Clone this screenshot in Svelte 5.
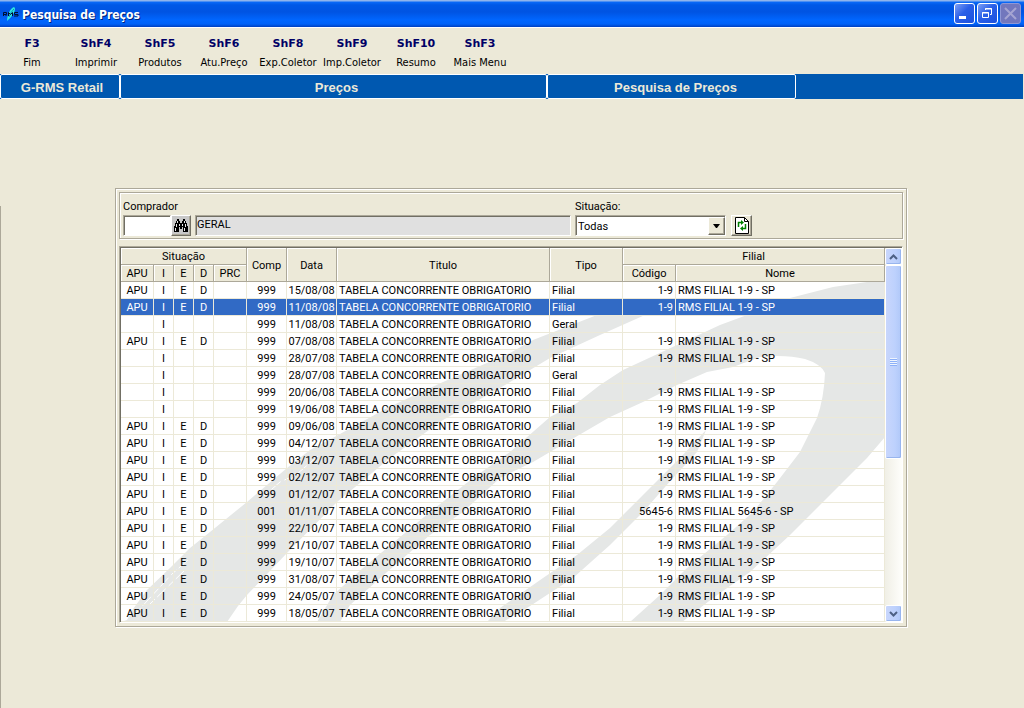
<script lang="ts">
  type Row = { flags: string; comp: string; data: string; tipo: string; codigo: string; nome: string }

  const actions = [
    { key: 'F3', label: 'Fim' },
    { key: 'ShF4', label: 'Imprimir' },
    { key: 'ShF5', label: 'Produtos' },
    { key: 'ShF6', label: 'Atu.Preço' },
    { key: 'ShF8', label: 'Exp.Coletor' },
    { key: 'ShF9', label: 'Imp.Coletor' },
    { key: 'ShF10', label: 'Resumo' },
    { key: 'ShF3', label: 'Mais Menu' },
  ]

  const filial = (data: string, flags = 'AIED', comp = '999', codigo = '1-9'): Row => ({
    flags, comp, data, codigo, tipo: 'Filial', nome: `RMS FILIAL ${codigo} - SP`,
  })
  const geral = (data: string): Row => ({ flags: 'I', comp: '999', data, tipo: 'Geral', codigo: '', nome: '' })

  const rows: Row[] = [
    filial('15/08/08'),
    filial('11/08/08'),
    geral('11/08/08'),
    filial('07/08/08'),
    filial('28/07/08', 'I'),
    geral('28/07/08'),
    filial('20/06/08', 'I'),
    filial('19/06/08', 'I'),
    filial('09/06/08'),
    filial('04/12/07'),
    filial('03/12/07'),
    filial('02/12/07'),
    filial('01/12/07'),
    filial('01/11/07', 'AIED', '001', '5645-6'),
    filial('22/10/07'),
    filial('21/10/07'),
    filial('19/10/07'),
    filial('31/08/07'),
    filial('24/05/07'),
    filial('18/05/07'),
  ]

  let selected = $state(1)
  let comprador = $state('')
  let situacao = $state('Todas')
</script>

<div class="window">
  <header class="titlebar">
    <svg class="logo" width="16" height="16" viewBox="0 0 16 16" aria-hidden="true">
      <path d="M4 15C4 10 7 2 11 1C14 3 10 10 4 15Z" fill="#2fe6e0" />
      <path d="M6 11C7 8 9 5 11 3" stroke="#0b8fb5" fill="none" />
      <path d="M.5 10V6.500h3v2h-3M3 9v1M5.500 10V6.500l2 2 2-2V10M15 6.500h-3.500v2H15v1.500h-4" stroke="#001030" fill="none" />
    </svg>
    <h1>Pesquisa de Preços</h1>
    <div class="controls">
      <button aria-label="Minimizar">
        <svg width="19" height="19" viewBox="0 0 19 19"><path d="M4 12h7v3H4z" fill="#fff" /></svg>
      </button>
      <button aria-label="Restaurar">
        <svg width="19" height="19" viewBox="0 0 19 19" fill="none" stroke="#fff">
          <path d="M7.500 6V4.500h6v6H12M7 5h7" /><path d="M4.500 8.500h6v5h-6zM4 9h7" />
        </svg>
      </button>
      <button class="off" aria-label="Fechar" disabled>
        <svg width="19" height="19" viewBox="0 0 19 19"><path d="M4 4l11 11M15 4L4 15" stroke="#a5a4d2" stroke-width="2" /></svg>
      </button>
    </div>
  </header>

  <nav class="toolbar">
    {#each actions as action}
      <button><b>{action.key}</b><span>{action.label}</span></button>
    {/each}
  </nav>

  <div class="crumbs">
    <span class="app">G-RMS Retail</span>
    <span class="module">Preços</span>
    <span class="page">Pesquisa de Preços</span>
  </div>

  <main>
    <section class="panel">
      <form class="filters etched">
        <div class="field code">
          <label for="comprador">Comprador</label>
          <div class="line">
            <input id="comprador" class="sunken" bind:value={comprador} />
            <button type="button" class="raised find" aria-label="Procurar comprador">
              <svg width="16" height="14" viewBox="0 0 16 14">
                <path d="M4 0h2v2h1v2h2V2h1V0h2v2h1v2h1v3h1v6h-5V8H9v2H7V8H6v5H1V7h1V4h1V2h1z" fill="#000" />
                <path d="M4.500 2v2M11.500 2v2M3.500 5v3M6.500 5v2M9.500 5v2M12.500 5v3M2.500 9v3M11.500 9v3" stroke="#e8e8e8" />
              </svg>
            </button>
          </div>
        </div>
        <input class="sunken name" aria-label="Nome do comprador" value="GERAL" readonly />
        <div class="field">
          <label for="situacao">Situação:</label>
          <div class="line">
            <div class="combo sunken">
              <select id="situacao" bind:value={situacao}>
                <option>Todas</option>
              </select>
              <span class="raised drop">
                <svg width="7" height="4" viewBox="0 0 7 4"><path d="M0 0h7L4 4H3z" /></svg>
              </span>
            </div>
            <button type="button" class="raised refresh" aria-label="Atualizar">
              <svg width="14" height="17" viewBox="0 0 14 17">
                <path d="M.5.5h9l4 4v12H.5z" fill="#fff" stroke="#000" />
                <path d="M9.500.5v4h4" fill="none" stroke="#000" />
                <path d="M3.500 10V5.500H7M10.500 7v4.500H7" fill="none" stroke="#008000" stroke-width="1.500" />
                <path d="M6 3v5l3-2.500zM8 9v5l-3-2.500z" fill="#008000" />
              </svg>
            </button>
          </div>
        </div>
      </form>

      <div class="grid">
        <div class="view">
          <svg class="swoosh" viewBox="121 248 764 374" preserveAspectRatio="none" aria-hidden="true">
            <path d="M121 622L127 620 133 609 147 590 170 568 190 548 210 532 247 502 287 468 310 450 340 434 387 408 443 382 510 353 533 340 597 315 680 300 645 315 600 335 550 358 500 388 443 420 390 458 337 502 287 553 247 595 238 606 227 622Z" />
            <path fill-rule="evenodd" d="M317 622L333 595 363 568 430 512 473 478 510 452 550 417 577 403 600 385 623 370 677 345 720 325 747 315 790 298 833 287 867 282 885 281V437L867 458 833 492 790 535 750 572 713 598 682 622H630L660 595 687 568 727 535 753 512 777 482 800 452 817 418Q824 398 825 373Q821 364 805 359Q785 354 760 357L733 367 707 372 677 385 643 402 610 417 567 442 533 462 500 478 463 512 430 535 387 572 350 605 340 622Z" />
            <path d="M706 430L697 452 673 478 643 512 610 545 573 578 527 608 503 622H487L500 608 543 578 577 555 610 528 643 495 680 458Z" />
            <path class="fleck" d="M136 613L172 574 188 560M150 604L185 570M264 496L280 482 300 473M290 480L318 456" />
          </svg>
          <table>
            <colgroup>
              <col class="w33" /><col class="w20" /><col class="w20" /><col class="w20" /><col class="w33" />
              <col class="w40" /><col class="w50" /><col class="w213" /><col class="w73" /><col class="w53" /><col />
            </colgroup>
            <thead>
              <tr>
                <th colspan="5">Situação</th>
                <th rowspan="2">Comp</th>
                <th rowspan="2">Data</th>
                <th rowspan="2">Titulo</th>
                <th rowspan="2">Tipo</th>
                <th colspan="2">Filial</th>
              </tr>
              <tr>
                <th>APU</th><th>I</th><th>E</th><th>D</th><th>PRC</th><th>Código</th><th>Nome</th>
              </tr>
            </thead>
            <tbody>
              {#each rows as row, i}
                <tr class:selected={i === selected} onclick={() => (selected = i)}>
                  <td class="mid">{row.flags.includes('A') ? 'APU' : ''}</td>
                  <td class="mid">{row.flags.includes('I') ? 'I' : ''}</td>
                  <td class="mid">{row.flags.includes('E') ? 'E' : ''}</td>
                  <td class="mid">{row.flags.includes('D') ? 'D' : ''}</td>
                  <td></td>
                  <td class="mid">{row.comp}</td>
                  <td class="mid">{row.data}</td>
                  <td>TABELA CONCORRENTE OBRIGATORIO</td>
                  <td>{row.tipo}</td>
                  <td class="end">{row.codigo}</td>
                  <td>{row.nome}</td>
                </tr>
              {/each}
            </tbody>
          </table>
        </div>
        <div class="scroll">
          <button aria-label="Rolar para cima">
            <svg width="9" height="6" viewBox="0 0 9 6"><path d="M1 5l3.500-3.500L8 5" /></svg>
          </button>
          <div class="thumb"><i></i></div>
          <button aria-label="Rolar para baixo">
            <svg width="9" height="6" viewBox="0 0 9 6"><path d="M1 1l3.500 3.500L8 1" /></svg>
          </button>
        </div>
      </div>
    </section>
  </main>
</div>

<style>
  :global(body) {
    background: #ece9d8;
  }
  .window {
    --face: #ece9d8;
    --shadow: #aca899;
    min-height: 100vh;
    display: flex;
    flex-direction: column;
    background: var(--face);
    color: #000;
    font: 11px/16px Roboto, Arial, sans-serif;
  }
  button, input, select {
    box-sizing: border-box;
    margin: 0;
    padding: 0;
    border: 0;
    border-radius: 0;
    color: inherit;
    font: inherit;
  }
  svg {
    display: block;
  }

  .titlebar {
    display: flex;
    align-items: center;
    height: 27px;
    padding: 0 3px;
    background: linear-gradient(#8fb4ec 0, #8fb4ec 1px, #0a6af8 2px, #0058e6 5px, #0054e3 12px, #0066ff 20px, #0062f8 24px, #0040c0 27px);
  }
  .titlebar h1 {
    flex: 1;
    margin: 0;
    padding: 2px 0 0 3px;
    color: #fff;
    font: bold 12px/16px "DejaVu Sans Condensed", "Trebuchet MS", sans-serif;
    text-shadow: 1px 1px #00237a;
  }
  .controls {
    display: flex;
    gap: 2px;
  }
  .controls button {
    width: 21px;
    height: 21px;
    border: 1px solid #fff;
    border-radius: 3px;
    background: linear-gradient(135deg, #7e9ff5, #2a5fe8 45%, #1b50dd);
  }
  .controls .off {
    border-color: #8f97d5;
    background: #7277bd;
  }

  .toolbar {
    display: flex;
    height: 46px;
    border-top: 1px solid #fff;
    font-family: "DejaVu Sans Condensed", Tahoma, sans-serif;
  }
  .toolbar button {
    display: flex;
    flex-direction: column;
    align-items: center;
    gap: 3px;
    width: 64px;
    padding-top: 8px;
    background: none;
    font-size: 11px;
    white-space: nowrap;
  }
  .toolbar b {
    color: #000066;
    font-family: "DejaVu Sans", Verdana, sans-serif;
  }

  .crumbs {
    display: flex;
    height: 25px;
    margin-right: 1px;
    background: #0058b0;
    color: #ece9d8;
    font: bold 13px/25px "Liberation Sans", Arial, sans-serif;
    text-align: center;
  }
  .crumbs span {
    box-sizing: border-box;
    border: 1px solid #fff;
    border-radius: 2px;
  }
  .app {
    width: 120px;
    padding-left: 4px;
  }
  .module {
    width: 427px;
    padding-left: 6px;
  }
  .page {
    width: 249px;
    padding-left: 8px;
  }

  main {
    position: relative;
    flex: 1;
    padding: 89px 117px 0 115px;
  }
  main::before {
    content: '';
    position: absolute;
    inset: 107px auto 0 0;
    width: 1px;
    background: var(--shadow);
  }
  .panel, .etched {
    border: 1px solid var(--shadow);
    box-shadow: inset 1px 1px #fff, 1px 1px #fff;
  }
  .panel {
    padding: 3px;
  }
  .filters {
    display: flex;
    align-items: flex-end;
    gap: 4px;
    padding: 6px 4px 2px 3px;
  }
  .field label {
    display: block;
    height: 16px;
  }
  .line {
    display: flex;
    gap: 5px;
  }
  .code .line {
    gap: 0;
  }
  .sunken {
    height: 21px;
    border: 1px solid;
    border-color: var(--shadow) #fff #fff var(--shadow);
    background: #fff;
    box-shadow: inset 1px 1px #716f64;
  }
  .sunken:focus {
    outline: none;
  }
  #comprador {
    width: 48px;
    padding: 0 3px;
  }
  .name {
    flex: 1;
    min-width: 0;
    padding: 0 1px 2px;
    background: #e0e0e0;
  }
  .raised {
    display: flex;
    align-items: center;
    justify-content: center;
    border: 1px solid;
    border-color: #fff #716f64 #716f64 #fff;
    background: var(--face);
    box-shadow: inset -1px -1px var(--shadow);
  }
  .find {
    width: 20px;
    height: 21px;
    background: #c8c8c8;
  }
  .refresh {
    width: 21px;
    height: 21px;
    margin-right: 146px;
  }
  .combo {
    position: relative;
    box-sizing: border-box;
    width: 151px;
  }
  .combo select {
    width: 100%;
    height: 19px;
    padding: 2px 0 0 2px;
    appearance: none;
    background: none;
  }
  .drop {
    position: absolute;
    top: 1px;
    right: 0;
    box-sizing: border-box;
    width: 17px;
    height: 18px;
    pointer-events: none;
  }

  .grid {
    display: flex;
    margin-top: 7px;
    border: 1px solid;
    border-color: var(--shadow) #fff #fff var(--shadow);
    box-shadow: inset 1px 1px #716f64;
    padding: 1px 0 0 1px;
  }
  .view {
    position: relative;
    flex: 1;
    min-width: 0;
    background: #fff;
  }
  .swoosh {
    position: absolute;
    width: 100%;
    height: 100%;
    fill: #e5e7e6;
  }
  .fleck {
    fill: none;
    stroke: #fff;
    stroke-dasharray: 7 3 12 4;
  }
  table {
    position: relative;
    width: 100%;
    table-layout: fixed;
    border-collapse: separate;
    border-spacing: 0;
  }
  .w20 { width: 20px; }
  .w33 { width: 33px; }
  .w40 { width: 40px; }
  .w50 { width: 50px; }
  .w53 { width: 53px; }
  .w73 { width: 73px; }
  .w213 { width: 213px; }
  th, td {
    height: 14px;
    padding: 2px 2px 0;
    border: solid #ece9d8;
    border-width: 0 1px 1px 0;
    line-height: 14px;
    text-align: left;
    white-space: nowrap;
  }
  th {
    padding: 2px 0 0;
    border-color: var(--shadow);
    background: var(--face);
    box-shadow: inset 1px 1px #fff;
    font-weight: normal;
    text-align: center;
  }
  .mid {
    padding: 2px 0 0;
    text-align: center;
  }
  .end {
    text-align: right;
  }
  .selected td {
    background: #316ac5;
    background-clip: padding-box;
    color: #fff;
  }

  .scroll {
    display: flex;
    flex-direction: column;
    width: 17px;
    background: linear-gradient(90deg, #f0efe6, #fefefb);
  }
  .scroll button, .thumb {
    display: flex;
    align-items: center;
    justify-content: center;
    box-sizing: border-box;
    border: 1px solid #fff;
    border-radius: 2px;
    background: linear-gradient(90deg, #c8d6fc, #bdd1fd 60%, #b0c8f8);
    box-shadow: inset -1px -1px #98b5ee;
  }
  .scroll button {
    width: 100%;
    height: 17px;
  }
  .scroll path {
    fill: none;
    stroke: #4d6185;
    stroke-width: 2;
  }
  .thumb {
    height: 52%;
    margin-bottom: auto;
  }
  .thumb i {
    width: 7px;
    height: 8px;
    background: repeating-linear-gradient(#eef4fe 0 1px, #8cb0f8 1px 2px);
  }
</style>
